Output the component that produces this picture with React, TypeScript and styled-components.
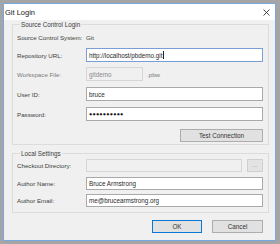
import React from 'react';
import styled, { createGlobalStyle } from 'styled-components';

const GlobalStyle = createGlobalStyle`
  html, body {
    margin: 0;
    padding: 0;
    background: #a5a5a5;
  }
  body {
    font-family: 'Liberation Sans', Arial, sans-serif;
  }
`;

const Screen = styled.div`
  width: 280px;
  height: 244px;
  padding: 3px 0 0 3px;
  box-sizing: border-box;
`;

const Window = styled.div`
  width: 273px;
  height: 238px;
  box-sizing: border-box;
  border: 1px solid #74a8de;
  background: #f0f0f0;
  display: flex;
  flex-direction: column;
`;

const TitleBar = styled.div`
  height: 16px;
  background: #ffffff;
  display: flex;
  align-items: center;
  justify-content: space-between;
  padding: 0 5px 0 1px;
  font-size: 7.5px;
  color: #222;
`;

const Body = styled.div`
  flex: 1;
  padding: 0 6px 0 8px;
  display: flex;
  flex-direction: column;
`;

const Group = styled.fieldset<{ $mt: number; $pb: number }>`
  margin: ${p => p.$mt}px 0 0 0;
  padding: 0 5px ${p => p.$pb}px 4px;
  border: 1px solid #dcdcdc;
  min-width: 0;
`;

const Legend = styled.legend`
  font-size: 6.3px;
  line-height: 9px;
  color: #3c3c3c;
  padding: 0 1px;
  margin-left: 3px;
`;

const Row = styled.div<{ $mt: number; $h: number }>`
  display: grid;
  grid-template-columns: 69px 1fr;
  align-items: center;
  margin-top: ${p => p.$mt}px;
  height: ${p => p.$h}px;
`;

const Label = styled.span<{ $dim?: boolean }>`
  font-size: 6.2px;
  color: ${p => (p.$dim ? '#7a7a7a' : '#3c3c3c')};
  white-space: nowrap;
`;

const Value = styled.span`
  font-size: 6.2px;
  color: #3c3c3c;
`;

const FieldLine = styled.div`
  display: flex;
  align-items: center;
  height: 100%;
  gap: 4px;
`;

const Field = styled.div<{ $state?: 'focus' | 'disabled'; $w?: number }>`
  box-sizing: border-box;
  height: 100%;
  ${p => (p.$w ? `width: ${p.$w}px;` : 'flex: 1;')}
  border: 1px solid
    ${p => (p.$state === 'focus' ? '#7a9fd8' : p.$state === 'disabled' ? '#d6d6d6' : '#a9a9a9')};
  background: ${p => (p.$state === 'disabled' ? '#f0f0f0' : '#ffffff')};
  display: flex;
  align-items: center;
  padding-left: 2px;
  font-size: 6.3px;
  color: ${p => (p.$state === 'disabled' ? '#8a8a8a' : '#2a2a2a')};
  white-space: nowrap;
  overflow: hidden;
`;

const Caret = styled.span`
  display: inline-block;
  width: 1px;
  height: 8px;
  background: #222;
  margin-left: 0.5px;
`;

const Dots = styled.span`
  font-size: 5.4px;
  letter-spacing: 0.2px;
  color: #111;
`;

const ButtonRow = styled.div<{ $mt: number }>`
  display: flex;
  justify-content: flex-end;
  gap: 10px;
  margin-top: ${p => p.$mt}px;
`;

const Button = styled.button<{ $w: number; $default?: boolean }>`
  width: ${p => p.$w}px;
  height: 13px;
  box-sizing: border-box;
  padding: 0;
  margin: 0;
  border: 1px solid ${p => (p.$default ? '#0a78d6' : '#adadad')};
  background: #e1e1e1;
  font-family: 'Liberation Sans', Arial, sans-serif;
  font-size: 6.3px;
  color: #333;
`;

const BrowseButton = styled.button`
  width: 16px;
  height: 100%;
  box-sizing: border-box;
  padding: 0 0 2px 0;
  margin: 0 0 0 1px;
  border: 1px solid #cfcfcf;
  background: #e3e3e3;
  font-family: 'Liberation Sans', Arial, sans-serif;
  font-size: 6px;
  color: #888;
`;

const Footer = styled.div`
  display: flex;
  justify-content: flex-end;
  gap: 10px;
  margin-top: 7px;
  padding-right: 6px;
`;

const CloseIcon = () => (
  <svg width="7" height="7" viewBox="0 0 7 7">
    <path d="M0.5 0.5 L6.5 6.5 M6.5 0.5 L0.5 6.5" stroke="#333" strokeWidth="0.9" />
  </svg>
);

export default function App() {
  return (
    <>
      <GlobalStyle />
      <Screen>
        <Window>
          <TitleBar>
            <span>Git Login</span>
            <CloseIcon />
          </TitleBar>
          <Body>
            <Group $mt={0} $pb={2}>
              <Legend>Source Control Login</Legend>
              <Row $mt={3} $h={10}>
                <Label>Source Control System:</Label>
                <Value>Git</Value>
              </Row>
              <Row $mt={6} $h={14}>
                <Label>Repository URL:</Label>
                <Field $state="focus">
                  http://localhost/pbdemo.git
                  <Caret />
                </Field>
              </Row>
              <Row $mt={5} $h={14}>
                <Label $dim>Workspace File:</Label>
                <FieldLine>
                  <Field $state="disabled" $w={57}>gitdemo</Field>
                  <Label $dim>.pbw</Label>
                </FieldLine>
              </Row>
              <Row $mt={6} $h={14}>
                <Label>User ID:</Label>
                <Field>bruce</Field>
              </Row>
              <Row $mt={6} $h={14}>
                <Label>Password:</Label>
                <Field>
                  <Dots>●●●●●●●●●●</Dots>
                </Field>
              </Row>
              <ButtonRow $mt={8}>
                <Button $w={83}>Test Connection</Button>
              </ButtonRow>
            </Group>
            <Group $mt={4} $pb={5}>
              <Legend>Local Settings</Legend>
              <Row $mt={1} $h={13}>
                <Label>Checkout Directory:</Label>
                <FieldLine>
                  <Field $state="disabled" />
                  <BrowseButton>...</BrowseButton>
                </FieldLine>
              </Row>
              <Row $mt={5} $h={13}>
                <Label>Author Name:</Label>
                <Field>Bruce Armstrong</Field>
              </Row>
              <Row $mt={4} $h={13}>
                <Label>Author Email:</Label>
                <Field>me@brucearmstrong.org</Field>
              </Row>
            </Group>
            <Footer>
              <Button $w={50} $default>OK</Button>
              <Button $w={51}>Cancel</Button>
            </Footer>
          </Body>
        </Window>
      </Screen>
    </>
  );
}
